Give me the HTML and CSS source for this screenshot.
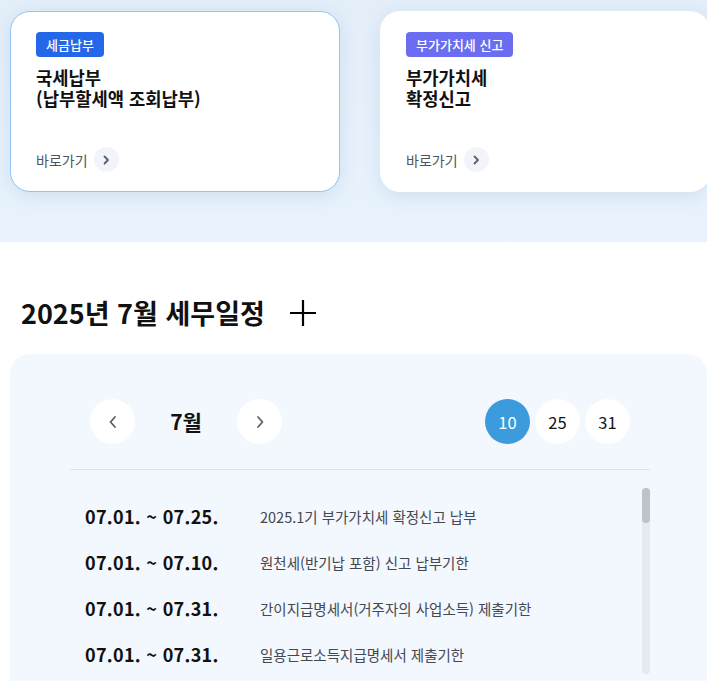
FILE: index.html
```html
<!DOCTYPE html>
<html lang="ko">
<head>
<meta charset="utf-8">
<title>세무일정</title>
<link rel="stylesheet" href="styles.css">
</head>
<body>
<section class="top">
  <div class="cards">
    <a class="card card-active" href="#">
      <span class="badge badge-blue">세금납부</span>
      <strong class="card-title">국세납부<br>(납부할세액 조회납부)</strong>
      <span class="go">바로가기 <span class="go-ico"><svg width="10" height="10" viewBox="0 0 10 10"><path d="M3.5 1.5 L7 5 L3.5 8.5" fill="none" stroke="#5b5f6b" stroke-width="1.8" stroke-linecap="round" stroke-linejoin="round"/></svg></span></span>
    </a>
    <a class="card" href="#">
      <span class="badge badge-violet">부가가치세 신고</span>
      <strong class="card-title">부가가치세<br>확정신고</strong>
      <span class="go">바로가기 <span class="go-ico"><svg width="10" height="10" viewBox="0 0 10 10"><path d="M3.5 1.5 L7 5 L3.5 8.5" fill="none" stroke="#5b5f6b" stroke-width="1.8" stroke-linecap="round" stroke-linejoin="round"/></svg></span></span>
    </a>
  </div>
</section>

<section class="schedule">
  <h2 class="sch-title">2025년 7월 세무일정 <span class="plus"><svg width="28" height="28" viewBox="0 0 28 28"><path d="M14 1 V27 M1 14 H27" stroke="#000" stroke-width="2.2"/></svg></span></h2>
  <div class="panel">
    <div class="inner">
      <div class="nav">
        <div class="month">
          <button class="circ" type="button"><svg width="12" height="14" viewBox="0 0 12 14"><path d="M8 2 L3.5 7 L8 12" fill="none" stroke="#5b5f6b" stroke-width="1.8" stroke-linecap="round" stroke-linejoin="round"/></svg></button>
          <span class="month-label">7월</span>
          <button class="circ" type="button"><svg width="12" height="14" viewBox="0 0 12 14"><path d="M4 2 L8.5 7 L4 12" fill="none" stroke="#5b5f6b" stroke-width="1.8" stroke-linecap="round" stroke-linejoin="round"/></svg></button>
        </div>
        <div class="days">
          <button class="day day-on" type="button">10</button>
          <button class="day" type="button">25</button>
          <button class="day" type="button">31</button>
        </div>
      </div>
      <div class="scroll">
        <ul class="list">
          <li><span class="date">07.01. ~ 07.25.</span><span class="desc">2025.1기 부가가치세 확정신고 납부</span></li>
          <li><span class="date">07.01. ~ 07.10.</span><span class="desc">원천세(반기납 포함) 신고 납부기한</span></li>
          <li><span class="date">07.01. ~ 07.31.</span><span class="desc">간이지급명세서(거주자의 사업소득) 제출기한</span></li>
          <li><span class="date">07.01. ~ 07.31.</span><span class="desc">일용근로소득지급명세서 제출기한</span></li>
        </ul>
        <div class="bar"><div class="thumb"></div></div>
      </div>
    </div>
  </div>
</section>
</body>
</html>
```

FILE: styles.css
```css
* { box-sizing: border-box; }
html, body { margin: 0; padding: 0; }
body {
  font-family: "Noto Sans CJK KR", "Noto Sans", sans-serif;
  color: #111;
  background: #fff;
  overflow: hidden;
}
a { text-decoration: none; color: inherit; }

.top {
  height: 242px;
  background: linear-gradient(180deg, #e3eef9 0%, #e8f3fd 100%);
  padding: 11px 0 0 10px;
  overflow: hidden;
}
.cards {
  display: flex;
  gap: 40px;
}
.card {
  flex: 0 0 330px;
  height: 181px;
  background: #fff;
  border-radius: 20px;
  border: 1px solid transparent;
  box-shadow: 0 4px 18px rgba(90, 130, 180, 0.16);
  padding: 20px 25px 19px;
  display: flex;
  flex-direction: column;
  align-items: flex-start;
}
.card-active { border-color: #92c5f4; }
.badge {
  display: inline-flex;
  align-items: center;
  height: 25px;
  padding: 0 10px;
  border-radius: 4px;
  color: #fff;
  font-size: 13px;
  font-weight: 500;
  line-height: 1;
}
.badge-blue { background: #2467e8; }
.badge-violet { background: #6a6df0; }
.card-title {
  margin-top: 10px;
  font-size: 17.7px;
  line-height: 21px;
  font-weight: 700;
  color: #111;
}
.go {
  margin-top: auto;
  display: flex;
  align-items: center;
  gap: 6px;
  font-size: 14px;
  line-height: 1;
  color: #4e5360;
}
.go-ico {
  width: 25px;
  height: 25px;
  border-radius: 50%;
  background: #f1f4f9;
  display: flex;
  align-items: center;
  justify-content: center;
}

.schedule { padding-top: 54px; }
.sch-title {
  margin: 0 0 25px 21px;
  height: 33px;
  display: flex;
  align-items: center;
  font-size: 27px;
  line-height: 1;
  font-weight: 700;
  color: #111;
}
.plus {
  margin-left: 24px;
  display: flex;
}
.panel {
  margin-left: 10px;
  background: #f3f7fe;
  border-radius: 20px 20px 0 0;
  padding: 45px 56px 0 60px;
  height: 400px;
}
.inner { width: 580px; }
.nav {
  display: flex;
  justify-content: space-between;
  align-items: center;
  padding: 0 20px 25px;
  border-bottom: 1px solid #dde2ea;
}
.month { display: flex; align-items: center; }
.circ {
  width: 45px;
  height: 45px;
  border-radius: 50%;
  border: 0;
  background: #fff;
  display: flex;
  align-items: center;
  justify-content: center;
  padding: 0;
}
.month-label {
  width: 102px;
  text-align: center;
  font-size: 21px;
  line-height: 1;
  font-weight: 700;
  color: #111;
}
.days { display: flex; gap: 5px; }
.day {
  width: 45px;
  height: 45px;
  border-radius: 50%;
  border: 0;
  background: #fff;
  font-family: "Noto Sans CJK KR", "Noto Sans", sans-serif;
  font-size: 16.5px;
  color: #111;
  padding: 0;
}
.day-on { background: #3b9bdc; color: #fff; }

.scroll {
  display: flex;
  margin-top: 18px;
  height: 186px;
}
.list {
  flex: 1;
  list-style: none;
  margin: 0;
  padding: 5px 0 0;
  overflow: hidden;
}
.list li {
  height: 46px;
  display: flex;
  align-items: center;
  padding-left: 15px;
}
.date {
  width: 175px;
  font-size: 18px;
  letter-spacing: 0.3px;
  font-weight: 700;
  color: #111;
}
.desc {
  font-size: 14.5px;
  color: #444851;
}
.bar {
  width: 8px;
  height: 186px;
  background: #e6e9f1;
  border-radius: 4px;
}
.thumb {
  height: 35px;
  background: #bec2ca;
  border-radius: 4px;
}
```
